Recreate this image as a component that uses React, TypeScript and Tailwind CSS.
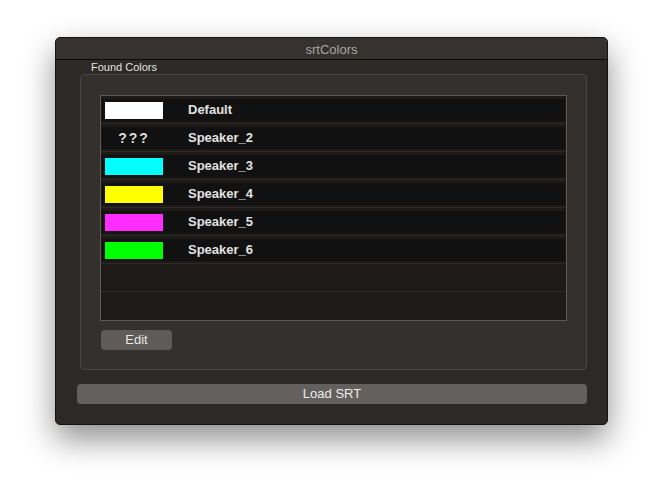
import * as React from "react";

const rows: { name: string; color?: string }[] = [
  { name: "Default", color: "#ffffff" },
  { name: "Speaker_2" },
  { name: "Speaker_3", color: "#00ffff" },
  { name: "Speaker_4", color: "#ffff00" },
  { name: "Speaker_5", color: "#ff2cff" },
  { name: "Speaker_6", color: "#00ff00" },
];

function Row({ name, color }: { name: string; color?: string }) {
  return (
    <div className="h-[28px] border-b border-[#2f2b28] pt-[3px]">
      <div className="mx-px flex h-[22px] items-center bg-[#111111]">
        <div className="ml-[3px] flex w-[58px] justify-center">
          {color ? (
            <div className="h-[17px] w-[58px]" style={{ background: color }} />
          ) : (
            <span className="text-[14px] font-bold tracking-[2px] text-[#dcdcdc]">???</span>
          )}
        </div>
        <span className="ml-[25px] text-[13px] font-bold text-[#e2e2e2]">{name}</span>
      </div>
    </div>
  );
}

export default function App() {
  return (
    <div
      className="h-[499px] w-[664px] bg-white pl-[55px] pt-[37px]"
      style={{ fontFamily: '"Liberation Sans", Arial, sans-serif' }}
    >
      <div className="flex h-[388px] w-[553px] flex-col overflow-hidden rounded-[5px] border border-[#151312] bg-[#2c2927] shadow-[0_14px_32px_rgba(0,0,0,0.45)]">
        <div className="flex h-[22px] shrink-0 items-center justify-center border-b border-[#0c0b0a] bg-[#363230] pt-[2px] text-[13px] text-[#a9a6a4]">
          srtColors
        </div>
        <div className="flex flex-1 flex-col pl-[21px] pr-[20px]">
          <div className="ml-[14px] mt-[1px] h-[13px] text-[11px] leading-[13px] text-[#e2e2e2]">Found Colors</div>
          <div className="ml-[3px] flex h-[296px] flex-col rounded-[4px] border border-[#4a4644] bg-[#34302e] px-[19px] pt-[20px]">
            <div className="h-[226px] border border-[#5c5957] bg-[#1e1a17]">
              {rows.map((r) => (
                <Row key={r.name} name={r.name} color={r.color} />
              ))}
              <div className="h-[28px] border-b border-[#2f2b28]" />
            </div>
            <button className="ml-px mt-[9px] flex h-[20px] w-[71px] items-center justify-center rounded-[4px] bg-[#5e5b59] text-[13px] text-[#e8e8e8]">
              Edit
            </button>
          </div>
          <button className="mt-[14px] flex h-[20px] w-[510px] items-center justify-center rounded-[4px] bg-[#63605e] text-[13px] text-[#ececec]">
            Load SRT
          </button>
        </div>
      </div>
    </div>
  );
}
